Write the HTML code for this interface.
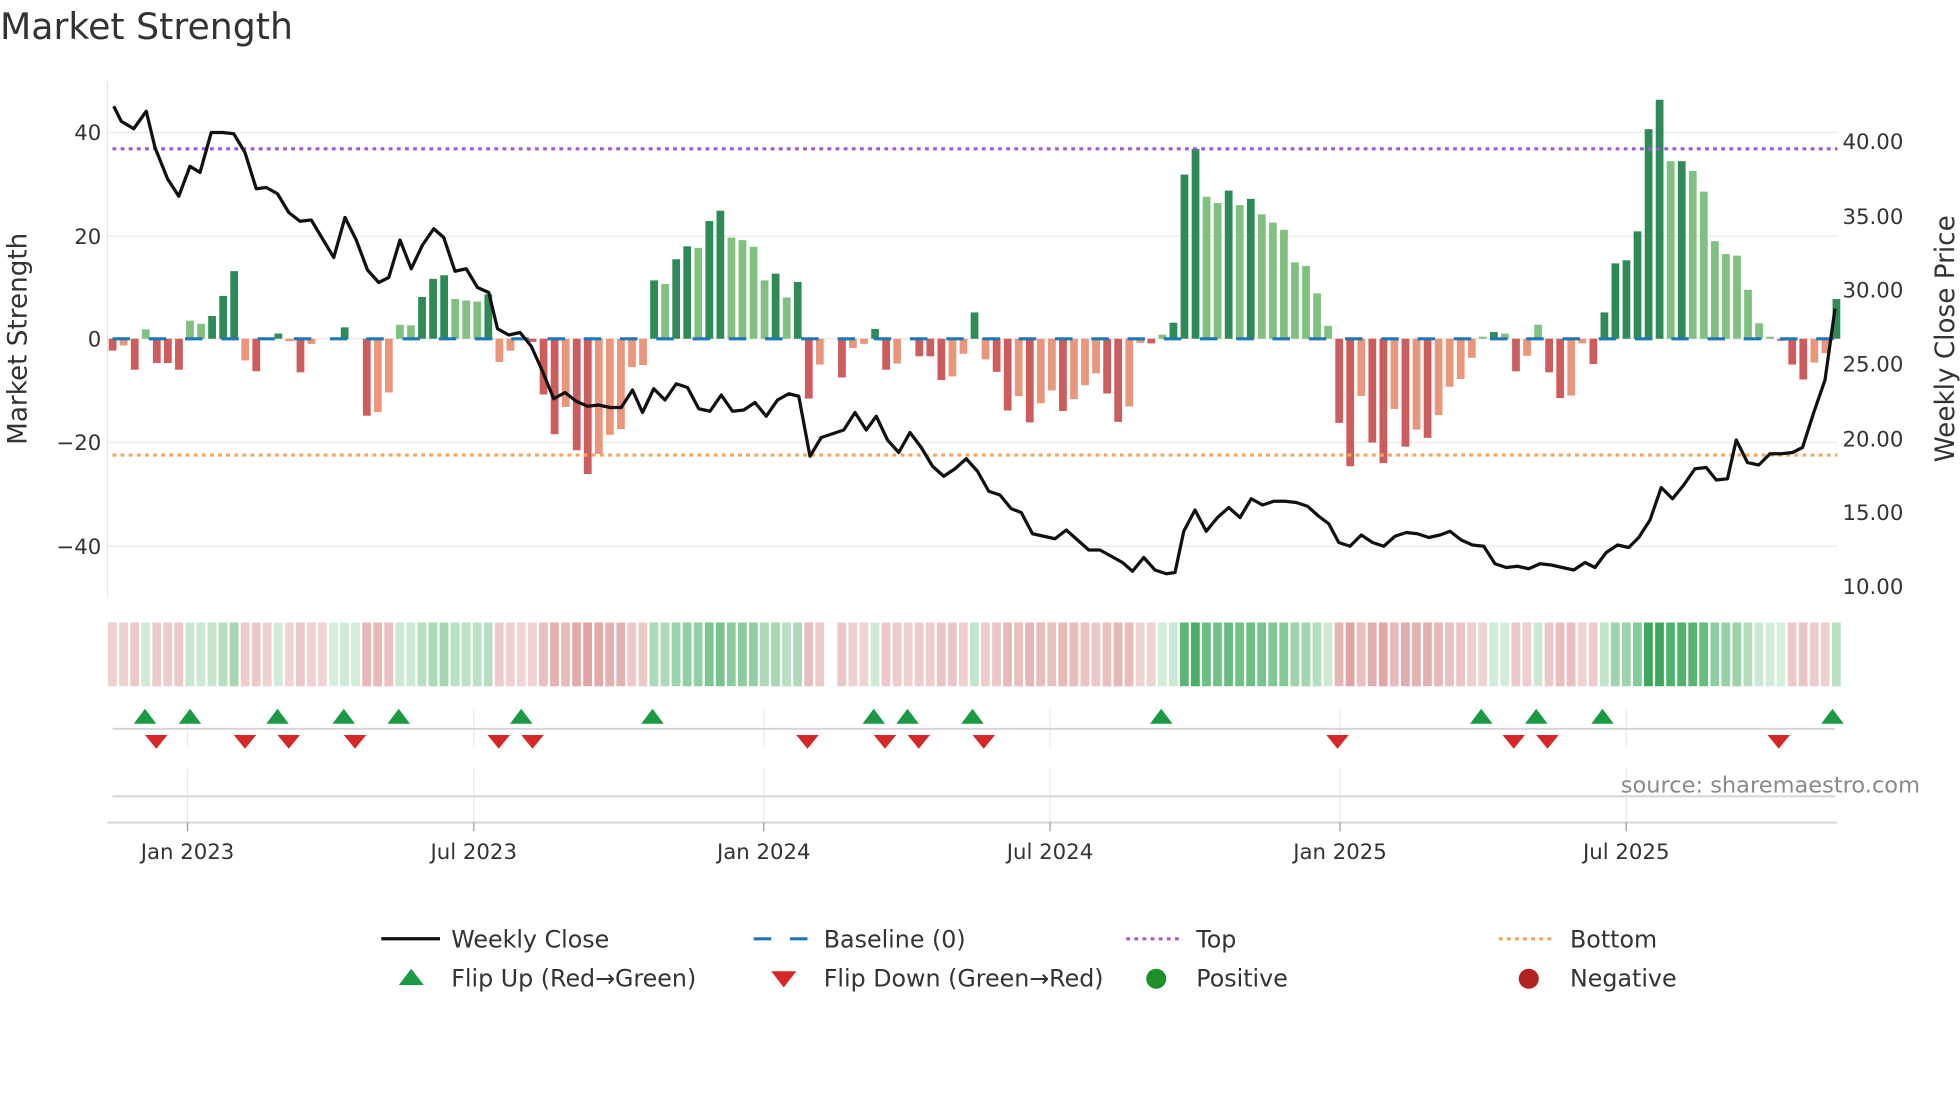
<!DOCTYPE html>
<html><head><meta charset="utf-8"><style>
html,body{margin:0;padding:0;background:#fff;}
svg{display:block;}
text{font-family:"DejaVu Sans","Liberation Sans",sans-serif;fill:#333;}
</style></head><body>
<svg id="s" width="1960" height="1102" viewBox="0 0 1568 881.6" xmlns="http://www.w3.org/2000/svg">
<text x="0" y="31" font-size="29">Market Strength</text>
<g stroke="#ececec" stroke-width="1.2">
<line x1="86" y1="106" x2="1470" y2="106"/><line x1="86" y1="189" x2="1470" y2="189"/>
<line x1="86" y1="354" x2="1470" y2="354"/><line x1="86" y1="437" x2="1470" y2="437"/>
<line x1="86" y1="271" x2="1470" y2="271"/>
</g>
<line x1="86" y1="65" x2="86" y2="478" stroke="#e6e6e6" stroke-width="1"/>
<g id="bars"></g>
<line x1="90" y1="271" x2="1470" y2="271" stroke="#1f77b4" stroke-width="2.5" stroke-dasharray="14 15"/>
<line x1="90" y1="119" x2="1470" y2="119" stroke="#9b59d6" stroke-width="2.5" stroke-dasharray="3 3.5"/>
<line x1="90" y1="364" x2="1470" y2="364" stroke="#f4a460" stroke-width="2.5" stroke-dasharray="3 3.5"/>
<polyline id="price" fill="none" stroke="#111" stroke-width="2.6" stroke-linejoin="round"/>
<g font-size="17" text-anchor="end">
<text x="81" y="112">40</text><text x="81" y="195">20</text><text x="81" y="277">0</text>
<text x="81" y="360">−20</text><text x="81" y="443">−40</text>
</g>
<g font-size="17">
<text x="1474" y="119">40.00</text><text x="1474" y="179">35.00</text><text x="1474" y="238">30.00</text>
<text x="1474" y="297">25.00</text><text x="1474" y="357">20.00</text><text x="1474" y="416">15.00</text><text x="1474" y="475">10.00</text>
</g>
<text x="0" y="0" font-size="21" text-anchor="middle" transform="translate(21,271) rotate(-90)">Market Strength</text>
<text x="0" y="0" font-size="21" text-anchor="middle" transform="translate(1563,271) rotate(-90)">Weekly Close Price</text>
<g id="heat"></g>
<g stroke="#e8e8ee" stroke-width="1">
<line x1="150" y1="567" x2="150" y2="598"/><line x1="379" y1="567" x2="379" y2="598"/><line x1="611" y1="567" x2="611" y2="598"/>
<line x1="840" y1="567" x2="840" y2="598"/><line x1="1072" y1="567" x2="1072" y2="598"/><line x1="1301" y1="567" x2="1301" y2="598"/>
<line x1="150" y1="615" x2="150" y2="658"/><line x1="379" y1="615" x2="379" y2="658"/><line x1="611" y1="615" x2="611" y2="658"/>
<line x1="840" y1="615" x2="840" y2="658"/><line x1="1072" y1="615" x2="1072" y2="658"/><line x1="1301" y1="615" x2="1301" y2="658"/>
</g>
<line x1="90" y1="583" x2="1468" y2="583" stroke="#d4d4d8" stroke-width="1.5"/>
<line x1="90" y1="637" x2="1468" y2="637" stroke="#d4d4d8" stroke-width="1.5"/>
<line x1="86" y1="658" x2="1470" y2="658" stroke="#d4d4d8" stroke-width="1.5"/>
<g stroke="#999" stroke-width="1">
<line x1="150" y1="658" x2="150" y2="665"/><line x1="379" y1="658" x2="379" y2="665"/><line x1="611" y1="658" x2="611" y2="665"/>
<line x1="840" y1="658" x2="840" y2="665"/><line x1="1072" y1="658" x2="1072" y2="665"/><line x1="1301" y1="658" x2="1301" y2="665"/>
</g>
<g id="flips"></g>
<text x="1536" y="634" font-size="18" text-anchor="end" style="fill:#8a8a8a">source: sharemaestro.com</text>
<g font-size="17" text-anchor="middle">
<text x="150" y="687">Jan 2023</text><text x="379" y="687">Jul 2023</text><text x="611" y="687">Jan 2024</text>
<text x="840" y="687">Jul 2024</text><text x="1072" y="687">Jan 2025</text><text x="1301" y="687">Jul 2025</text>
</g>
<g font-size="19">
<line x1="305" y1="751" x2="352" y2="751" stroke="#111" stroke-width="2.6"/><text x="361" y="758">Weekly Close</text>
<line x1="603" y1="751" x2="647" y2="751" stroke="#1f77b4" stroke-width="2.5" stroke-dasharray="14 15" /><text x="659" y="758">Baseline (0)</text>
<line x1="901" y1="751" x2="945" y2="751" stroke="#9b59d6" stroke-width="2.5" stroke-dasharray="3 3.5"/><text x="957" y="758">Top</text>
<line x1="1199" y1="751" x2="1243" y2="751" stroke="#f4a460" stroke-width="2.5" stroke-dasharray="3 3.5"/><text x="1256" y="758">Bottom</text>
<polygon points="319,788 329,775 339,788" fill="#1a9a45"/><text x="361" y="789">Flip Up (Red→Green)</text>
<polygon points="617,777 637,777 627,790" fill="#d62728"/><text x="659" y="789">Flip Down (Green→Red)</text>
<circle cx="925" cy="783" r="8" fill="#1f8f2a"/><text x="957" y="789">Positive</text>
<circle cx="1223" cy="783" r="8" fill="#b22222"/><text x="1256" y="789">Negative</text>
</g>
</svg>
<script>
var V=[-2.3,-1.3,-6,1.8,-4.7,-4.7,-6,3.5,2.9,4.4,8.3,13.1,-4.2,-6.3,0,1,-0.5,-6.5,-1,0,0,2.2,0,-14.9,-14.2,-10.4,2.7,2.6,8.1,11.6,12.3,7.7,7.4,7.2,8.6,-4.5,-2.3,0,-0.6,-10.8,-18.5,-13.2,-21.6,-26.2,-22.3,-18.6,-17.5,-5.5,-5.1,11.3,10.6,15.4,17.9,17.6,22.8,24.8,19.6,19.1,17.8,11.3,12.6,8,11,-11.6,-5,0,-7.5,-1.8,-1,1.9,-6,-4.8,0,-3.4,-3.4,-8,-7.3,-2.9,5.1,-4,-6.4,
-13.9,-11.1,-16.2,-12.5,-10,-14,-11.7,-9,-6.7,-10.6,-16.1,-13.1,-0.8,-0.9,0.8,3.1,31.8,36.8,27.5,26.3,28.7,25.9,27.1,24.1,22.5,21.1,14.8,14.1,8.8,2.5,-16.3,-24.7,-11.1,-20.1,-24.1,-13.6,-20.9,-17.6,-19.2,-14.8,-9.3,-7.8,-3.7,0.4,1.3,1,-6.3,-3.3,2.7,-6.5,-11.5,-11,-0.9,-4.9,5.1,14.6,15.2,20.8,40.6,46.3,34.4,34.4,32.5,28.5,18.9,16.4,16.1,9.5,3,0.4,-0.4,-5,-7.9,-4.6,-2.8,7.7];
var ns="http://www.w3.org/2000/svg";
function el(t,a,p){var e=document.createElementNS(ns,t);for(var k in a)e.setAttribute(k,a[k]);p.appendChild(e);return e;}
var bars=document.getElementById('bars'),heat=document.getElementById('heat');
for(var i=0;i<V.length;i++){
 var v=V[i],x=90+8.84*i,prev=i>0?V[i-1]:0,col;
 var strong=Math.abs(v)>=Math.abs(prev);
 if(v>0)col=strong?'#2e8b57':'#80c080';else col=strong?'#cd5c5c':'#e9967a';
 var h=Math.abs(v)*4.13;
 if(h>0.3) el('rect',{x:x-3,y:v>0?271-h:271,width:6.2,height:h,fill:col},bars);
 if(i==65)continue;
 var s=v; if(Math.abs(s)<0.5){s=(V[i-1]||0)*0.3;}
 var t=Math.min(Math.abs(s)/40,1),c;
 if(s>=0){c='rgb('+Math.round(214-(214-60)*t)+','+Math.round(238-(238-168)*t)+','+Math.round(220-(220-90)*t)+')';}
 else{c='rgb('+Math.round(240-(240-215)*t)+','+Math.round(212-(212-135)*t)+','+Math.round(212-(212-135)*t)+')';}
 el('rect',{x:x-3.5,y:498,width:7,height:51,fill:c},heat);
}
var P=[[91,85],[97,97],[107,103],[117,89],[124,118],[134,143],[143,157],[152,133],[160,138],[169,106],[178,106],[187,107],[196,122],[205,151],[213,150],[222,155],[231,170],[240,177],[249,176],[258,191],[267,206],[276,174],[285,192],[294,216],[303,226],[311,222],[320,192],[329,215],[338,196],[347,183],[355,190],[364,217],[373,215],[382,230],[391,234],[398,263],[407,268],[416,266],[425,277],[434,297],[443,319],[452,314],[461,321],[470,325],[479,324],[488,326],[497,326],[506,312],[514,330],[523,311],[532,320],[541,307],[550,310],[559,327],[568,329],[577,316],[586,329],[595,328],[604,322],[613,333],[622,320],[631,315],[639,317],[648,365],[657,350],[666,347],[675,344],[684,330],[693,344],[701,333],[710,352],[719,362],[728,346],[737,358],[746,373],[755,381],[764,375],[773,367],[782,377],[791,393],[800,396],[809,407],[817,410],[826,427],[835,429],[844,431],[853,424],[862,432],[871,440],[880,440],[889,445],[898,450],[906,457],[915,446],[924,456],[933,459],[940,458],[947,425],[956,408],[965,425],[974,414],[983,406],[992,414],[1001,399],[1010,404],[1019,401],[1028,401],[1037,402],[1046,405],[1055,413],[1063,419],[1071,434],[1080,437],[1089,428],[1098,434],[1107,437],[1116,429],[1125,426],[1134,427],[1143,430],[1152,428],[1160,425],[1169,432],[1178,436],[1187,437],[1196,451],[1205,454],[1214,453],[1223,455],[1232,451],[1241,452],[1250,454],[1259,456],[1268,450],[1276,454],[1285,442],[1294,436],[1303,438],[1311,430],[1320,416],[1329,390],[1338,399],[1347,388],[1356,375],[1365,374],[1373,384],[1382,383],[1389,352],[1398,370],[1407,372],[1416,363],[1425,363],[1434,362],[1442,358],[1451,330],[1460,304],[1468,247]];
document.getElementById('price').setAttribute('points',P.map(function(p){return p.join(',')}).join(' '));
var fl=document.getElementById('flips');
[116,152,222,275,319,417,522,699,726,778,929,1185,1229,1282,1466].forEach(function(x){el('polygon',{points:(x-9)+',579 '+x+',567 '+(x+9)+',579',fill:'#1a9a45'},fl);});
[125,196,231,284,399,426,646,708,735,787,1070,1211,1238,1423].forEach(function(x){el('polygon',{points:(x-9)+',588 '+(x+9)+',588 '+x+',599',fill:'#d62728'},fl);});
</script>
</body></html>
